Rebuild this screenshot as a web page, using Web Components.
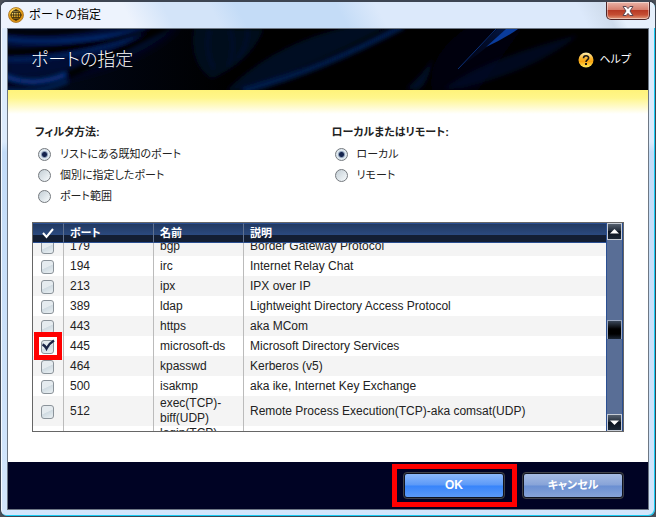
<!DOCTYPE html>
<html lang="ja">
<head>
<meta charset="utf-8">
<title>ポートの指定</title>
<style>
  html, body {
    height: 100%;
    margin: 0;
  }
  body {
    background: #4b5058;
    color: #222;
    font: 12px/15px "Liberation Sans", "Noto Sans CJK JP", sans-serif;
  }
</style>
</head>
<body>
<dialog-window caption="ポートの指定">
  <banner-header slot="banner" heading="ポートの指定"></banner-header>
  <radio-group slot="filters" name="filter" legend="フィルタ方法:" options="リストにある既知のポート,個別に指定したポート,ポート範囲"></radio-group>
  <radio-group slot="filters" name="side" legend="ローカルまたはリモート:" options="ローカル,リモート"></radio-group>
  <port-table></port-table>
  <mark-box slot="actions"><push-button primary label="OK"></push-button></mark-box>
  <push-button slot="actions" label="キャンセル"></push-button>
</dialog-window>

<script>
class DialogWindow extends HTMLElement {
  constructor() {
    super();
    this.attachShadow({ mode: "open" });
    this.shadowRoot.innerHTML = `
    <style>
    :host {
      display: flex;
      flex-direction: column;
      box-sizing: border-box;
      height: 100vh;
      min-height: 400px;
      padding: 0 6px 6px;
      border: 1px solid #3d4552;
      border-top-width: 2px;
      border-radius: 7px;
      background: linear-gradient(#f0f6ff, #dcebfc 30px, #dcebfc 140px, #c3dcf8 150px, #d3e6fc);
      box-shadow: inset -1px -1px #18cdf4, inset 1px 1px #f6faff;
    }
    .title {
      display: flex;
      align-items: center;
      gap: 5px;
      height: 26px;
      margin: 0 -6px;
      padding: 0 6px 0 7px;
      border-radius: 6px 6px 0 0;
      color: #000;
      background: linear-gradient(62deg, #edf3fd 0 20%, #d3e4f9 26% 33%, #c4dcf7 37% 52%, #dce9fb 58% 88%, #cfdcec 92%, #e6f0fc 94%);
    }
    .title span {
      flex: 1;
    }
    .title button {
      align-self: flex-start;
      width: 44px;
      height: 18px;
      margin: 0 -1px 0 0;
      padding: 0;
      border: 1px solid #4e2628;
      border-top: 0;
      border-radius: 0 0 5px 5px;
      background: linear-gradient(#eab4a8, #d6806f 45%, #b83a25 50%, #c54e33 75%, #e29a7c);
      box-shadow: inset 0 0 0 1px #ffffff70;
    }
    .title button svg {
      display: block;
      margin: 0 auto;
    }
    .body {
      display: flex;
      flex: 1;
      flex-direction: column;
      min-height: 0;
      border: 1px solid #6d7784;
      background: #fff;
    }
    main {
      display: flex;
      flex: 1;
      flex-direction: column;
      min-height: 0;
      padding: 34px 24px 30px;
      background: linear-gradient(#fff37a, #fff68c 8px, #fff 24px);
    }
    .filters {
      display: grid;
      grid-template-columns: 1fr 1fr;
      gap: 4px;
      margin: 0 0 15px 3px;
    }
    footer {
      display: flex;
      align-items: center;
      justify-content: flex-end;
      gap: 17px;
      height: 47px;
      padding-right: 24px;
      background: #000324;
    }
    </style>
    <div class="title">
      <svg width="16" height="16" viewBox="0 0 18 18">
        <defs>
          <radialGradient id="gold" cx=".4" cy=".3">
            <stop offset="0" stop-color="#fff0a0"/>
            <stop offset=".6" stop-color="#f8bd2c"/>
            <stop offset="1" stop-color="#dc9312"/>
          </radialGradient>
        </defs>
        <circle cx="9" cy="9" r="8.4" fill="url(#gold)" stroke="#a8752a"/>
        <g fill="none" stroke="#34270c">
          <circle cx="9" cy="9" r="5.5"/>
          <ellipse cx="9" cy="9" rx="2.7" ry="5.5"/>
          <path d="M2.5 9h13M4.5 6h9M4.500 12h9M9 2.500v13"/>
        </g>
      </svg>
      <span></span>
      <button type="button" aria-label="閉じる">
        <svg width="12" height="12" viewBox="0 0 12 12">
          <path d="M1 1.5h3.200L6 3.600 7.800 1.500H11L8 6l3 4.500H7.800L6 8.400 4.200 10.500H1L4 6z" fill="#fff" stroke="#5c4650"/>
        </svg>
      </button>
    </div>
    <div class="body">
      <slot name="banner"></slot>
      <main>
        <div class="filters"><slot name="filters"></slot></div>
        <slot></slot>
      </main>
      <footer><slot name="actions"></slot></footer>
    </div>`;
  }
  connectedCallback() {
    this.shadowRoot.querySelector("span").textContent = this.getAttribute("caption");
  }
}

class BannerHeader extends HTMLElement {
  constructor() {
    super();
    this.attachShadow({ mode: "open" });
    this.shadowRoot.innerHTML = `
    <style>
    :host {
      display: grid;
      flex: none;
      height: 61px;
      overflow: hidden;
      color: #fff;
      background: #000;
    }
    .art, .bar {
      grid-area: 1 / 1;
      min-width: 0;
    }
    .art {
      width: 100%;
      height: 61px;
    }
    .bar {
      display: flex;
      align-items: center;
      justify-content: space-between;
      padding: 0 17px 0 23px;
      z-index: 1;
    }
    h1 {
      margin: 0;
      font-size: 18px;
      font-weight: 300;
      line-height: 24px;
      font-feature-settings: "palt";
    }
    a {
      display: flex;
      align-items: center;
      gap: 5px;
      color: #fff;
      font-size: 11px;
      text-decoration: none;
      font-feature-settings: "palt";
    }
    </style>
    <svg class="art" viewBox="0 0 640 61" preserveAspectRatio="none" aria-hidden="true">
      <defs>
        <filter id="soft"><feGaussianBlur stdDeviation="2"/></filter>
        <filter id="wide"><feGaussianBlur stdDeviation="6"/></filter>
        <linearGradient id="beam" x1="0" y1="1" x2="1" y2="0">
          <stop offset="0" stop-color="#021540" stop-opacity=".2"/>
          <stop offset="1" stop-color="#0c43ad"/>
        </linearGradient>
        <linearGradient id="fade">
          <stop offset="0" stop-color="#01091d"/>
          <stop offset="1" stop-color="#000"/>
        </linearGradient>
      </defs>
      <rect width="220" height="61" fill="url(#fade)"/>
      <path d="M-5 -5H170Q120 45-5 55z" fill="#021135" filter="url(#wide)"/>
      <g fill="none" filter="url(#soft)">
        <path d="M-5 10Q60 18 145-2" stroke="#073080" stroke-width="3"/>
        <path d="M-5 1Q40 7 90-3" stroke="#000" stroke-width="5"/>
        <path d="M-5 23Q75 24 165-6" stroke="#000" stroke-width="7"/>
        <path d="M-5 31Q65 32 145 3" stroke="#052766" stroke-width="3"/>
        <path d="M-5 50Q35 60 78 38T160-3" stroke="#000" stroke-width="7"/>
        <path d="M-5 46Q25 60 58 45" stroke="#073080" stroke-width="5"/>
        <path d="M-5 61Q30 66 60 52" stroke="#04255f" stroke-width="4"/>
      </g>
      <g filter="url(#soft)">
        <path d="M186-2Q180 35 204 50Q244 32 256 0z" fill="#01071a"/>
        <path d="M202 0Q196 20 206 40M222 0Q228 20 220 38M240 0Q240 18 228 32" fill="none" stroke="#020f2d" stroke-width="3"/>
        <path d="M235 62Q330 25 382-4H350Q270 10 218 62z" fill="#010a20"/>
        <path d="M235 62Q310 42 395-3" fill="none" stroke="#041d4e" stroke-width="6"/>
        <path d="M398 60Q415 45 425 30Q420 55 410 61z" fill="#020c28"/>
      </g>
      <path d="M424 61Q418 26 460-2H515L470 61z" fill="#01040d" filter="url(#soft)"/>
      <path d="M450 40L489 0H502L470 25z" fill="url(#beam)" opacity=".35"/>
      <path d="M478 18L498 0H510Q496 10 478 18z" fill="#0a3c9c"/>
      <path d="M450 40L488 0" stroke="#0a3078" fill="none"/>
      <path d="M436 60Q475 30 570 6Q530 40 454 59z" fill="#02102f" opacity=".65" filter="url(#soft)"/>
    </svg>
    <div class="bar">
      <h1></h1>
      <a href="#help">
        <svg width="16" height="16" viewBox="0 0 16 16">
          <defs>
            <linearGradient id="amber" x1="0" y1="0" x2="0" y2="1">
              <stop offset="0" stop-color="#fff0b0"/>
              <stop offset=".4" stop-color="#fbb42b"/>
              <stop offset=".6" stop-color="#f7a411"/>
              <stop offset="1" stop-color="#ffec5e"/>
            </linearGradient>
          </defs>
          <circle cx="8" cy="8" r="7.5" fill="url(#amber)"/>
          <path d="M5.5 6.2C5.5 2.9 10.700 2.900 10.600 6 10.500 7.900 8 7.800 8 10" fill="none" stroke="#181818" stroke-width="1.6"/>
          <rect x="7" y="11" width="2" height="2" fill="#181818"/>
        </svg>
        ヘルプ
      </a>
    </div>`;
  }
  connectedCallback() {
    this.shadowRoot.querySelector("h1").textContent = this.getAttribute("heading");
  }
}

class RadioGroup extends HTMLElement {
  constructor() {
    super();
    this.attachShadow({ mode: "open" });
    this.shadowRoot.innerHTML = `
    <style>
    :host {
      display: block;
      font-size: 11px;
      font-feature-settings: "palt";
    }
    fieldset {
      margin: 0;
      padding: 0;
      border: 0;
    }
    legend {
      padding: 0 0 4px;
      font-weight: bold;
      line-height: 16px;
    }
    .row {
      display: flex;
      align-items: center;
      gap: 9px;
      height: 21px;
      padding-left: 3px;
    }
    input {
      appearance: none;
      width: 13px;
      height: 13px;
      margin: 0;
      border: 1px solid #74797e;
      border-radius: 50%;
      background: linear-gradient(135deg, #c3ced5, #edf2f5 80%);
    }
    input:checked {
      background: radial-gradient(circle, #14234d 0 2px, #8b9db7 3px, #dde7ee 4px);
    }
    </style>
    <fieldset><legend></legend></fieldset>`;
  }
  connectedCallback() {
    const name = this.getAttribute("name");
    const fieldset = this.shadowRoot.querySelector("fieldset");
    fieldset.querySelector("legend").textContent = this.getAttribute("legend");
    this.getAttribute("options").split(",").forEach((text, i) => {
      const row = document.createElement("div");
      row.className = "row";
      row.innerHTML = `<input type="radio" name="${name}" id="${name}${i}" ${i === 0 ? "checked" : ""}><label for="${name}${i}">${text}</label>`;
      fieldset.appendChild(row);
    });
  }
}

// Red frame drawn around whatever is slotted in
class MarkBox extends HTMLElement {
  constructor() {
    super();
    this.attachShadow({ mode: "open" });
    this.shadowRoot.innerHTML = `
    <style>
    :host {
      display: block;
      position: relative;
    }
    :host::after {
      content: "";
      position: absolute;
      inset: var(--mark-inset, -8px -12px -8px -11px);
      border: 5px solid #f00;
      pointer-events: none;
    }
    </style>
    <slot></slot>`;
  }
}

class PushButton extends HTMLElement {
  constructor() {
    super();
    this.attachShadow({ mode: "open" });
    this.shadowRoot.innerHTML = `
    <style>
    :host {
      display: block;
      --top: #a6bbe2;
      --mid: #87a3d8;
      --low: #6a8fd2;
      font-size: 11px;
    }
    :host([primary]) {
      --top: #8bb8fb;
      --mid: #5b99f8;
      --low: #3784fb;
      font-size: 12px;
    }
    button {
      display: block;
      width: 102px;
      height: 27px;
      padding: 0;
      border: 2px solid #10131f;
      border-radius: 4px;
      outline: 1px solid #41434b;
      outline-offset: -1px;
      color: #fff;
      background: linear-gradient(var(--top), var(--mid) 48%, var(--low) 52%, var(--mid));
      font: inherit;
      font-weight: bold;
      font-feature-settings: "palt";
    }
    </style>
    <button type="button"></button>`;
  }
  connectedCallback() {
    this.shadowRoot.querySelector("button").textContent = this.getAttribute("label");
  }
}

const PORTS = [
  ["179", "bgp", "Border Gateway Protocol"],
  ["194", "irc", "Internet Relay Chat"],
  ["213", "ipx", "IPX over IP"],
  ["389", "ldap", "Lightweight Directory Access Protocol"],
  ["443", "https", "aka MCom"],
  ["445", "microsoft-ds", "Microsoft Directory Services"],
  ["464", "kpasswd", "Kerberos (v5)"],
  ["500", "isakmp", "aka ike, Internet Key Exchange"],
  ["512", "exec(TCP)-<br>biff(UDP)", "Remote Process Execution(TCP)-aka comsat(UDP)"],
  ["", "login(TCP)", ""],
];

class PortTable extends HTMLElement {
  constructor() {
    super();
    this.attachShadow({ mode: "open" });
    this.shadowRoot.innerHTML = `
    <style>
    :host {
      display: flex;
      flex: 1;
      min-height: 0;
      border: 1px solid #666;
    }
    .view {
      flex: 1;
      overflow: hidden;
    }
    table {
      width: 100%;
      table-layout: fixed;
      border-spacing: 0;
    }
    .c-check { width: 30px; }
    .c-port, .c-name { width: 90px; }
    th {
      position: sticky;
      top: 0;
      z-index: 2;
      box-sizing: border-box;
      height: 20px;
      padding: 0 0 0 6px;
      border: solid #2a4f92;
      border-width: 1px 0;
      color: #fff;
      background: linear-gradient(#223961, #2b4a7f 11px, #131e33 11px);
      font-size: 11px;
      line-height: 18px;
      text-align: left;
      font-feature-settings: "palt";
    }
    th + th {
      border-left: 1px solid #5f7190;
    }
    th svg {
      display: block;
    }
    td {
      box-sizing: border-box;
      height: 20px;
      padding: 0 0 0 6px;
    }
    td + td {
      border-left: 1px solid #bbb;
    }
    th:first-child, td:first-child {
      padding: 0 0 0 8px;
    }
    tbody tr:nth-child(odd) {
      background: #f4f4f4;
    }
    tbody tr:last-child td {
      height: 30px;
      vertical-align: top;
    }
    input {
      appearance: none;
      display: block;
      width: 13px;
      height: 14px;
      margin: 2px 0 0;
      border: 1px solid #8b939a;
      border-radius: 3px;
      background: linear-gradient(155deg, #e5ebef 48%, #d0dbe2 52%, #eaf0f3);
    }
    mark-box {
      width: 13px;
      --mark-inset: -6px -8px -6px -7px;
    }
    .check {
      display: grid;
    }
    .check input, .check svg {
      grid-area: 1 / 1;
    }
    .check svg {
      pointer-events: none;
      overflow: visible;
    }
    .bar {
      display: flex;
      flex-direction: column;
      width: 15px;
      border: solid #2a4f92;
      border-width: 0 1px;
      background: #596e96;
    }
    .bar button {
      display: grid;
      place-items: center;
      flex: none;
      width: 15px;
      height: 17px;
      padding: 0;
      border: 1px solid #c5cbd5;
      background: linear-gradient(#55606e, #232d3a 45%, #0c1420 50%, #1c2735);
    }
    .track {
      display: flex;
      flex: 1;
      flex-direction: column;
    }
    .track::before {
      content: "";
      flex: 81;
    }
    .track::after {
      content: "";
      flex: 75;
    }
    .thumb {
      height: 18px;
      border: solid #9aa7bf;
      border-width: 1px 1px 0;
      background: linear-gradient(#3a4759, #000 8px, #000 13px, #1b2635);
    }
    </style>
    <div class="view">
      <table>
        <colgroup><col class="c-check"><col class="c-port"><col class="c-name"><col></colgroup>
        <thead>
          <tr>
            <th aria-label="選択"><svg width="14" height="14" viewBox="0 0 14 14"><path d="M2 7l3.5 4L12 3" fill="none" stroke="#fff" stroke-width="2"/></svg></th>
            <th>ポート</th><th>名前</th><th>説明</th>
          </tr>
        </thead>
        <tbody></tbody>
      </table>
    </div>
    <div class="bar">
      <button type="button" aria-label="上へ"><svg width="9" height="5" viewBox="0 0 9 5"><path d="M0 4.5L4.5 0 9 4.5z" fill="#fff"/></svg></button>
      <div class="track"><div class="thumb"></div></div>
      <button type="button" aria-label="下へ"><svg width="9" height="5" viewBox="0 0 9 5"><path d="M0 .5h9L4.5 5z" fill="#fff"/></svg></button>
    </div>`;
  }
  connectedCallback() {
    const tbody = this.shadowRoot.querySelector("tbody");
    PORTS.forEach(([port, name, text]) => {
      const tr = document.createElement("tr");
      let box = port ? `<input type="checkbox" aria-label="${port}">` : "";
      if (port === "445") {
        box = `<mark-box><div class="check">
          <input type="checkbox" aria-label="${port}" checked>
          <svg width="13" height="14" viewBox="0 0 13 14"><path d="M1.5 6.5Q4 7.5 5.5 10.5 8 5.5 13 2.5" fill="none" stroke="#1b2547" stroke-width="2.5"/></svg>
        </div></mark-box>`;
      }
      tr.innerHTML = `<td>${box}</td><td>${port}</td><td>${name}</td><td>${text}</td>`;
      tbody.appendChild(tr);
    });
    this.shadowRoot.querySelector(".view").scrollTop = 7;
  }
}

customElements.define("dialog-window", DialogWindow);
customElements.define("banner-header", BannerHeader);
customElements.define("radio-group", RadioGroup);
customElements.define("mark-box", MarkBox);
customElements.define("push-button", PushButton);
customElements.define("port-table", PortTable);
</script>
</body>
</html>
